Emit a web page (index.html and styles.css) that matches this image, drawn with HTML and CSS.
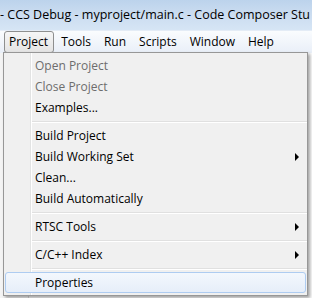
FILE: index.html
```html
<!DOCTYPE html>
<html lang="en">
<head>
    <meta charset="UTF-8">
    <title>CCS Debug - myproject/main.c</title>
    <link rel="stylesheet" href="styles.css">
</head>
<body>
    <div class="window">
        <div class="titlebar">- CCS Debug - myproject/main.c - Code Composer Stu</div>

        <div class="menubar">
            <span class="menu-item open">Project</span>
            <span class="menu-item">Tools</span>
            <span class="menu-item">Run</span>
            <span class="menu-item">Scripts</span>
            <span class="menu-item">Window</span>
            <span class="menu-item">Help</span>
        </div>

        <div class="workbench">
            <div class="pane-left"></div>
            <div class="pane-main"></div>
        </div>

        <!-- Project menu, dropped down over the workbench -->
        <div class="dropdown">
            <div class="entry disabled">Open Project</div>
            <div class="entry disabled">Close Project</div>
            <div class="entry">Examples...</div>
            <div class="sep"></div>
            <div class="entry">Build Project</div>
            <div class="entry sub">Build Working Set</div>
            <div class="entry">Clean...</div>
            <div class="entry">Build Automatically</div>
            <div class="sep"></div>
            <div class="entry sub">RTSC Tools</div>
            <div class="sep"></div>
            <div class="entry sub">C/C++ Index</div>
            <div class="sep"></div>
            <div class="entry hover">Properties</div>
        </div>
    </div>
</body>
</html>
```

FILE: styles.css
```css
html, body {
    margin: 0;
    padding: 0;
}
body {
    font-family: "Open Sans", "Noto Sans", sans-serif;
    font-size: 12px;
    color: #000;
    background: #f0f0f0;
}
.window {
    position: relative;
    width: 312px;
    height: 298px;
    overflow: hidden;
    display: flex;
    flex-direction: column;
}
.titlebar {
    height: 30px;
    line-height: 30px;
    font-size: 12.5px;
    white-space: nowrap;
    background: linear-gradient(#bcd3ec, #cadcf0 45%, #d6e5f5);
    color: #000;
}
.menubar {
    height: 22px;
    display: flex;
    align-items: stretch;
    padding-left: 4px;
    background: linear-gradient(#fafcfe, #e9eff8);
    border-top: 1px solid #e4ecf6;
}
.menu-item {
    padding: 0 5px 0 4px;
    line-height: 20px;
    border: 1px solid transparent;
    border-radius: 3px;
    margin-right: 2px;
}
.menu-item.open {
    border-color: #8e8f8f;
    background: linear-gradient(#f6f6f6, #e4e4e4);
}
.workbench {
    flex: 1;
    display: flex;
    background: #f4f4f4;
}
.pane-left {
    width: 28px;
    border-right: 1px solid #d6d6d6;
}
.pane-main {
    flex: 1;
    background: #fafafa;
}
.dropdown {
    position: absolute;
    left: 3px;
    top: 52px;
    width: 303px;
    padding: 2px 0;
    background: #f0f0f0;
    border: 1px solid #979797;
    box-shadow: 2px 2px 3px rgba(0, 0, 0, 0.35);
    background-image: linear-gradient(90deg, transparent 26px, #e2e3e3 26px, #e2e3e3 27px, #fff 27px, #fff 28px, transparent 28px);
}
.entry {
    position: relative;
    height: 21px;
    line-height: 21px;
    padding-left: 29px;
    margin: 0 1px;
    border: 1px solid transparent;
    border-width: 0 1px;
    white-space: nowrap;
}
.entry.disabled {
    color: #6d6d6d;
}
.entry.sub::after {
    content: "";
    position: absolute;
    right: 6px;
    top: 7px;
    border-left: 4px solid #000;
    border-top: 4px solid transparent;
    border-bottom: 4px solid transparent;
}
.entry.hover {
    border: 1px solid #aeccf1;
    border-radius: 3px;
    height: 19px;
    line-height: 19px;
    background: linear-gradient(#f3f7fd, #e6eef9);
}
.sep {
    height: 7px;
    margin-left: 28px;
    background: linear-gradient(transparent 3px, #e0e0e0 3px, #e0e0e0 4px, #fff 4px, #fff 5px, transparent 5px);
}
```
